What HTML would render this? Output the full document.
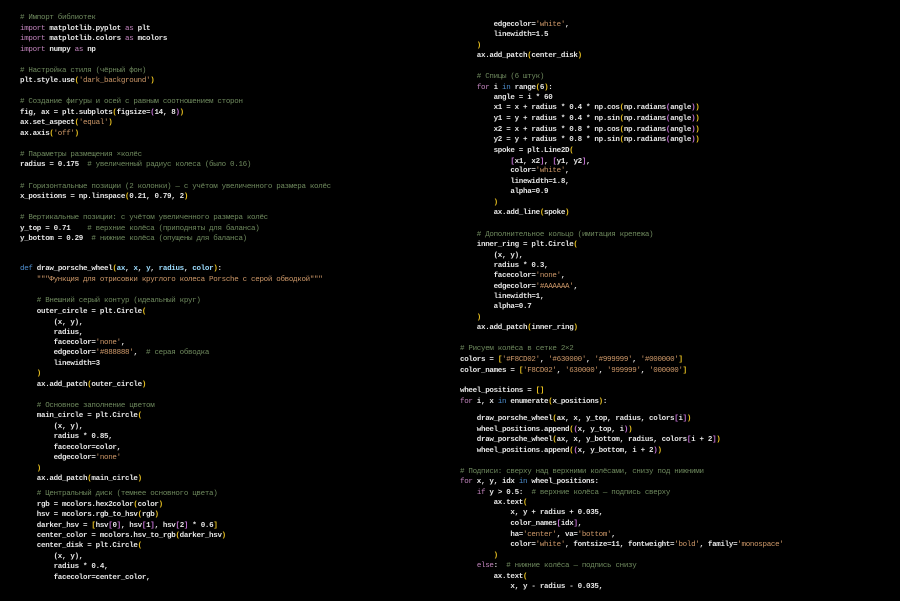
<!DOCTYPE html>
<html><head><meta charset="utf-8"><style>
html,body{margin:0;padding:0;background:#000;width:900px;height:601px;overflow:hidden}
.l{position:absolute;white-space:pre;font-family:"Liberation Mono","DejaVu Sans Mono",monospace;font-size:7.5px;letter-spacing:-0.3px;line-height:10px;color:#e6e6e6;font-weight:bold}
.c{color:#6f8a5e;font-weight:normal}
.k{color:#c586c0;font-weight:normal}
.d{color:#4f8fd0;font-weight:normal}
.s{color:#d09a6a;font-weight:normal}
.b{color:#e8c020}
.m{color:#c070d0}
.p{color:#9cdcfe}
</style></head><body>
<div class="l c" style="left:20px;top:13px"># Импорт библиотек</div>
<div class="l" style="left:20px;top:24px"><span class="k">import</span> matplotlib.pyplot <span class="k">as</span> plt</div>
<div class="l" style="left:20px;top:34px"><span class="k">import</span> matplotlib.colors <span class="k">as</span> mcolors</div>
<div class="l" style="left:20px;top:45px"><span class="k">import</span> numpy <span class="k">as</span> np</div>
<div class="l c" style="left:20px;top:66px"># Настройка стиля (чёрный фон)</div>
<div class="l" style="left:20px;top:76px">plt.style.use<span class="b">(</span><span class="s">'dark_background'</span><span class="b">)</span></div>
<div class="l c" style="left:20px;top:97px"># Создание фигуры и осей с равным соотношением сторон</div>
<div class="l" style="left:20px;top:108px">fig, ax = plt.subplots<span class="b">(</span>figsize=<span class="m">(</span>14, 8<span class="m">)</span><span class="b">)</span></div>
<div class="l" style="left:20px;top:118px">ax.set_aspect<span class="b">(</span><span class="s">'equal'</span><span class="b">)</span></div>
<div class="l" style="left:20px;top:129px">ax.axis<span class="b">(</span><span class="s">'off'</span><span class="b">)</span></div>
<div class="l c" style="left:20px;top:150px"># Параметры размещения ×колёс</div>
<div class="l" style="left:20px;top:160px">radius = 0.175  <span class="c"># увеличенный радиус колеса (было 0.16)</span></div>
<div class="l c" style="left:20px;top:182px"># Горизонтальные позиции (2 колонки) — с учётом увеличенного размера колёс</div>
<div class="l" style="left:20px;top:192px">x_positions = np.linspace<span class="b">(</span>0.21, 0.79, 2<span class="b">)</span></div>
<div class="l c" style="left:20px;top:213px"># Вертикальные позиции: с учётом увеличенного размера колёс</div>
<div class="l" style="left:20px;top:224px">y_top = 0.71    <span class="c"># верхние колёса (приподняты для баланса)</span></div>
<div class="l" style="left:20px;top:234px">y_bottom = 0.29  <span class="c"># нижние колёса (опущены для баланса)</span></div>

<div class="l" style="left:20px;top:264px"><span class="d">def</span> draw_porsche_wheel<span class="b">(</span><span class="p">ax</span>, <span class="p">x</span>, <span class="p">y</span>, <span class="p">radius</span>, <span class="p">color</span><span class="b">)</span>:</div>
<div class="l s" style="left:20px;top:275px">    """Функция для отрисовки круглого колеса Porsche с серой обводкой"""</div>
<div class="l c" style="left:20px;top:296px">    # Внешний серый контур (идеальный круг)</div>
<div class="l" style="left:20px;top:307px">    outer_circle = plt.Circle<span class="b">(</span></div>
<div class="l" style="left:20px;top:318px">        (x, y),</div>
<div class="l" style="left:20px;top:328px">        radius,</div>
<div class="l" style="left:20px;top:338px">        facecolor=<span class="s">'none'</span>,</div>
<div class="l" style="left:20px;top:348px">        edgecolor=<span class="s">'#888888'</span>,  <span class="c"># серая обводка</span></div>
<div class="l" style="left:20px;top:359px">        linewidth=3</div>
<div class="l b" style="left:20px;top:369px">    )</div>
<div class="l" style="left:20px;top:380px">    ax.add_patch<span class="b">(</span>outer_circle<span class="b">)</span></div>
<div class="l c" style="left:20px;top:401px">    # Основное заполнение цветом</div>
<div class="l" style="left:20px;top:411px">    main_circle = plt.Circle<span class="b">(</span></div>
<div class="l" style="left:20px;top:422px">        (x, y),</div>
<div class="l" style="left:20px;top:432px">        radius * 0.85,</div>
<div class="l" style="left:20px;top:443px">        facecolor=color,</div>
<div class="l" style="left:20px;top:453px">        edgecolor=<span class="s">'none'</span></div>
<div class="l b" style="left:20px;top:464px">    )</div>
<div class="l" style="left:20px;top:474px">    ax.add_patch<span class="b">(</span>main_circle<span class="b">)</span></div>
<div class="l c" style="left:20px;top:489px">    # Центральный диск (темнее основного цвета)</div>
<div class="l" style="left:20px;top:500px">    rgb = mcolors.hex2color<span class="b">(</span>color<span class="b">)</span></div>
<div class="l" style="left:20px;top:510px">    hsv = mcolors.rgb_to_hsv<span class="b">(</span>rgb<span class="b">)</span></div>
<div class="l" style="left:20px;top:521px">    darker_hsv = <span class="b">[</span>hsv<span class="m">[</span>0<span class="m">]</span>, hsv<span class="m">[</span>1<span class="m">]</span>, hsv<span class="m">[</span>2<span class="m">]</span> * 0.6<span class="b">]</span></div>
<div class="l" style="left:20px;top:531px">    center_color = mcolors.hsv_to_rgb<span class="b">(</span>darker_hsv<span class="b">)</span></div>
<div class="l" style="left:20px;top:541px">    center_disk = plt.Circle<span class="b">(</span></div>
<div class="l" style="left:20px;top:552px">        (x, y),</div>
<div class="l" style="left:20px;top:562px">        radius * 0.4,</div>
<div class="l" style="left:20px;top:573px">        facecolor=center_color,</div>

<div class="l" style="left:460px;top:20px">        edgecolor=<span class="s">'white'</span>,</div>
<div class="l" style="left:460px;top:30px">        linewidth=1.5</div>
<div class="l b" style="left:460px;top:41px">    )</div>
<div class="l" style="left:460px;top:51px">    ax.add_patch<span class="b">(</span>center_disk<span class="b">)</span></div>
<div class="l c" style="left:460px;top:72px">    # Спицы (6 штук)</div>
<div class="l" style="left:460px;top:83px">    <span class="k">for</span> i <span class="d">in</span> range<span class="b">(</span>6<span class="b">)</span>:</div>
<div class="l" style="left:460px;top:93px">        angle = i * 60</div>
<div class="l" style="left:460px;top:103px">        x1 = x + radius * 0.4 * np.cos<span class="b">(</span>np.radians<span class="m">(</span>angle<span class="m">)</span><span class="b">)</span></div>
<div class="l" style="left:460px;top:114px">        y1 = y + radius * 0.4 * np.sin<span class="b">(</span>np.radians<span class="m">(</span>angle<span class="m">)</span><span class="b">)</span></div>
<div class="l" style="left:460px;top:125px">        x2 = x + radius * 0.8 * np.cos<span class="b">(</span>np.radians<span class="m">(</span>angle<span class="m">)</span><span class="b">)</span></div>
<div class="l" style="left:460px;top:135px">        y2 = y + radius * 0.8 * np.sin<span class="b">(</span>np.radians<span class="m">(</span>angle<span class="m">)</span><span class="b">)</span></div>
<div class="l" style="left:460px;top:146px">        spoke = plt.Line2D<span class="b">(</span></div>
<div class="l" style="left:460px;top:157px">            <span class="m">[</span>x1, x2<span class="m">]</span>, <span class="m">[</span>y1, y2<span class="m">]</span>,</div>
<div class="l" style="left:460px;top:166px">            color=<span class="s">'white'</span>,</div>
<div class="l" style="left:460px;top:177px">            linewidth=1.8,</div>
<div class="l" style="left:460px;top:187px">            alpha=0.9</div>
<div class="l b" style="left:460px;top:198px">        )</div>
<div class="l" style="left:460px;top:208px">        ax.add_line<span class="b">(</span>spoke<span class="b">)</span></div>
<div class="l c" style="left:460px;top:230px">    # Дополнительное кольцо (имитация крепежа)</div>
<div class="l" style="left:460px;top:240px">    inner_ring = plt.Circle<span class="b">(</span></div>
<div class="l" style="left:460px;top:251px">        (x, y),</div>
<div class="l" style="left:460px;top:261px">        radius * 0.3,</div>
<div class="l" style="left:460px;top:271px">        facecolor=<span class="s">'none'</span>,</div>
<div class="l" style="left:460px;top:282px">        edgecolor=<span class="s">'#AAAAAA'</span>,</div>
<div class="l" style="left:460px;top:292px">        linewidth=1,</div>
<div class="l" style="left:460px;top:302px">        alpha=0.7</div>
<div class="l b" style="left:460px;top:313px">    )</div>
<div class="l" style="left:460px;top:323px">    ax.add_patch<span class="b">(</span>inner_ring<span class="b">)</span></div>

<div class="l c" style="left:460px;top:344px"># Рисуем колёса в сетке 2×2</div>
<div class="l" style="left:460px;top:355px">colors = <span class="b">[</span><span class="s">'#F8CD02'</span>, <span class="s">'#630000'</span>, <span class="s">'#999999'</span>, <span class="s">'#000000'</span><span class="b">]</span></div>
<div class="l" style="left:460px;top:366px">color_names = <span class="b">[</span><span class="s">'F8CD02'</span>, <span class="s">'630000'</span>, <span class="s">'999999'</span>, <span class="s">'000000'</span><span class="b">]</span></div>
<div class="l" style="left:460px;top:386px">wheel_positions = <span class="b">[]</span></div>
<div class="l" style="left:460px;top:397px"><span class="k">for</span> i, x <span class="d">in</span> enumerate<span class="b">(</span>x_positions<span class="b">)</span>:</div>
<div class="l" style="left:460px;top:414px">    draw_porsche_wheel<span class="b">(</span>ax, x, y_top, radius, colors<span class="m">[</span>i<span class="m">]</span><span class="b">)</span></div>
<div class="l" style="left:460px;top:425px">    wheel_positions.append<span class="b">(</span><span class="m">(</span>x, y_top, i<span class="m">)</span><span class="b">)</span></div>
<div class="l" style="left:460px;top:435px">    draw_porsche_wheel<span class="b">(</span>ax, x, y_bottom, radius, colors<span class="m">[</span>i + 2<span class="m">]</span><span class="b">)</span></div>
<div class="l" style="left:460px;top:446px">    wheel_positions.append<span class="b">(</span><span class="m">(</span>x, y_bottom, i + 2<span class="m">)</span><span class="b">)</span></div>
<div class="l c" style="left:460px;top:467px"># Подписи: сверху над верхними колёсами, снизу под нижними</div>
<div class="l" style="left:460px;top:477px"><span class="k">for</span> x, y, idx <span class="d">in</span> wheel_positions:</div>
<div class="l" style="left:460px;top:488px">    <span class="k">if</span> y &gt; 0.5:  <span class="c"># верхние колёса — подпись сверху</span></div>
<div class="l" style="left:460px;top:498px">        ax.text<span class="b">(</span></div>
<div class="l" style="left:460px;top:508px">            x, y + radius + 0.035,</div>
<div class="l" style="left:460px;top:519px">            color_names<span class="m">[</span>idx<span class="m">]</span>,</div>
<div class="l" style="left:460px;top:530px">            ha=<span class="s">'center'</span>, va=<span class="s">'bottom'</span>,</div>
<div class="l" style="left:460px;top:540px">            color=<span class="s">'white'</span>, fontsize=11, fontweight=<span class="s">'bold'</span>, family=<span class="s">'monospace'</span></div>
<div class="l b" style="left:460px;top:551px">        )</div>
<div class="l" style="left:460px;top:561px">    <span class="k">else</span>:  <span class="c"># нижние колёса — подпись снизу</span></div>
<div class="l" style="left:460px;top:572px">        ax.text<span class="b">(</span></div>
<div class="l" style="left:460px;top:582px">            x, y - radius - 0.035,</div>
</body></html>
